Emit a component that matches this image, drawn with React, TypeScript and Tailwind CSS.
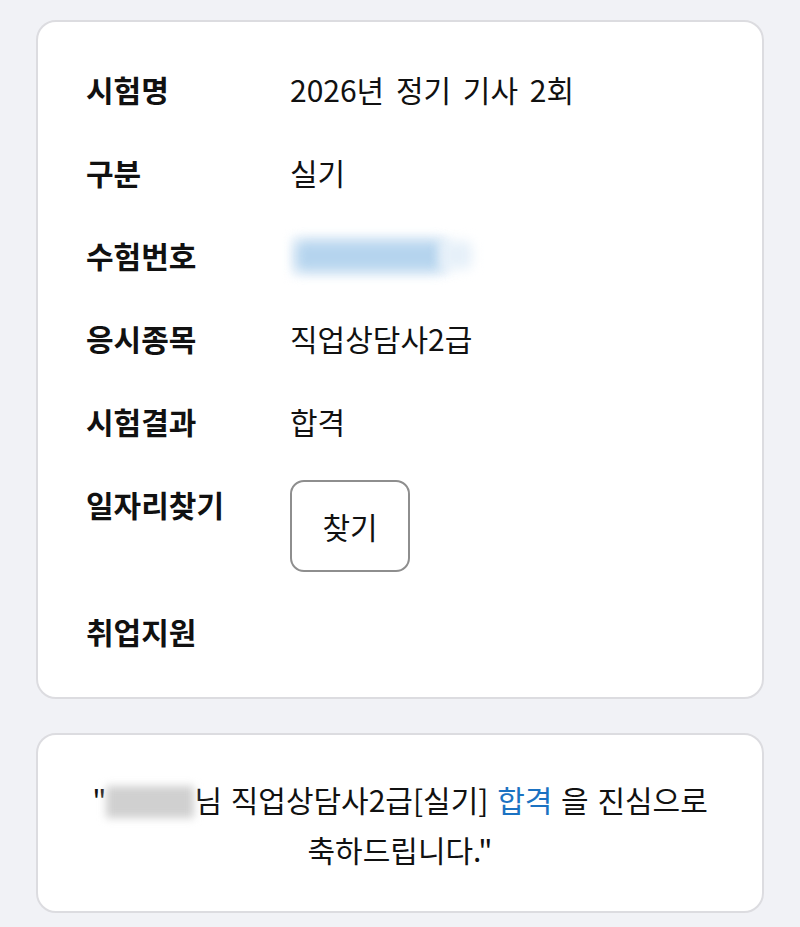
import React from "react";

const font = { fontFamily: '"Noto Sans CJK KR", "Noto Sans", sans-serif' };

function Row({ label, children }: { label: string; children?: React.ReactNode }) {
  return (
    <div className="flex items-start">
      <div className="w-[204px] shrink-0 font-bold leading-[83px]">{label}</div>
      <div className="flex-1 leading-[83px] [word-spacing:5px]">{children}</div>
    </div>
  );
}

export default function App() {
  return (
    <div className="min-h-[927px] bg-[#f1f2f6] px-[36px] pt-[20px] text-[#111111]" style={font}>
      <div className="rounded-[20px] border-2 border-[#dcdce0] bg-white pl-[48px] pr-[48px] pt-[26px] pb-[24px] text-[30px]">
        <Row label="시험명">2026년 정기 기사 2회</Row>
        <Row label="구분">실기</Row>
        <Row label="수험번호">
          <div className="flex h-[83px] items-center">
            <div className="relative h-[50px] w-[190px]">
              <div className="absolute left-[0px] top-[4px] h-[42px] w-[160px] rounded-md bg-[#eef5fb] blur-[4px]" />
              <div className="absolute left-[6px] top-[10px] h-[30px] w-[146px] rounded-md bg-[#b5d4ee] blur-[6px]" />
              <div className="absolute left-[150px] top-[10px] h-[28px] w-[32px] rounded-md bg-[#e6f0f9] blur-[6px]" />
            </div>
          </div>
        </Row>
        <Row label="응시종목">직업상담사2급</Row>
        <Row label="시험결과">합격</Row>
        <div className="flex items-start">
          <div className="w-[204px] shrink-0 font-bold leading-[83px]">일자리찾기</div>
          <div className="flex-1 pt-[17px] pb-[18px]">
            <button className="flex h-[92px] w-[120px] items-center justify-center rounded-[14px] border-2 border-[#8e8e8e] bg-white text-[30px] leading-none text-[#111111]">
              찾기
            </button>
          </div>
        </div>
        <Row label="취업지원" />
      </div>
      <div className="mt-[34px] rounded-[20px] border-2 border-[#dcdce0] bg-white pt-[39px] pb-[37px] text-center text-[30px] leading-[50px] [word-spacing:2px]">
        <span>"</span>
        <span className="inline-block h-[32px] w-[88px] translate-y-[6px] bg-[#d0d0d0] blur-[4px]" />
        <span>님 직업상담사2급[실기] </span>
        <span className="text-[#1b72c2]">합격</span>
        <span> 을 진심으로</span>
        <br />
        <span>축하드립니다."</span>
      </div>
    </div>
  );
}
